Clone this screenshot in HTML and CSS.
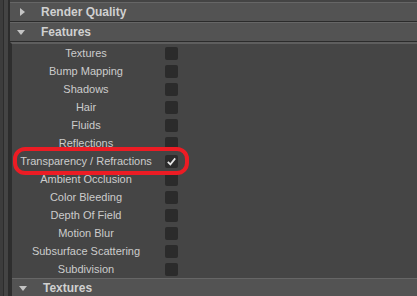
FILE: index.html
```html
<!DOCTYPE html>
<html lang="en">

<head>
    <meta charset="UTF-8">
    <title>Render Settings</title>
    <link rel="stylesheet" href="styles.css">
</head>

<body>
    <div class="page">
        <div class="gutter"></div>
        <div class="panel">
            <div class="header">
                <span class="tw"><span class="arrow-right"></span></span>Render Quality
            </div>
            <div class="header">
                <span class="tw"><span class="arrow-down"></span></span>Features
            </div>
            <div class="body">
                <div class="row"><span class="label">Textures</span><span class="check"></span></div>
                <div class="row"><span class="label">Bump Mapping</span><span class="check"></span></div>
                <div class="row"><span class="label">Shadows</span><span class="check"></span></div>
                <div class="row"><span class="label">Hair</span><span class="check"></span></div>
                <div class="row"><span class="label">Fluids</span><span class="check"></span></div>
                <div class="row"><span class="label">Reflections</span><span class="check"></span></div>
                <div class="row">
                    <span class="label">Transparency / Refractions</span>
                    <span class="check">
                        <svg width="13" height="13" viewBox="0 0 13 13">
                            <path d="M2.8 6.8 L5.4 9.4 L10.2 3.4" fill="none" stroke="#e6e6e6" stroke-width="1.7" />
                        </svg>
                    </span>
                </div>
                <div class="row"><span class="label">Ambient Occlusion</span><span class="check"></span></div>
                <div class="row"><span class="label">Color Bleeding</span><span class="check"></span></div>
                <div class="row"><span class="label">Depth Of Field</span><span class="check"></span></div>
                <div class="row"><span class="label">Motion Blur</span><span class="check"></span></div>
                <div class="row"><span class="label">Subsurface Scattering</span><span class="check"></span></div>
                <div class="row"><span class="label">Subdivision</span><span class="check"></span></div>
                <div class="highlight"></div>
                <div class="header">
                    <span class="tw"><span class="arrow-down"></span></span>Textures
                </div>
            </div>
        </div>
    </div>
</body>

</html>
```

FILE: styles.css
```css
body {
    margin: 0;
    background-color: #3c3c3c;
    font-family: "Liberation Sans", Arial, sans-serif;
    color: #cccccc;
    overflow: hidden;
}

.page {
    display: flex;
    height: 296px;
}

.gutter {
    width: 4px;
    margin-left: 3px;
    border-left: 1px solid #2c2c2c;
    border-right: 2px solid #2c2c2c;
    background-color: #444444;
}

.panel {
    flex: 1;
    padding-top: 2px;
    background-color: #444444;
}

.header {
    display: flex;
    align-items: center;
    height: 18px;
    border-top: 1px solid #666666;
    border-bottom: 1px solid #2b2b2b;
    background-color: #535353;
    font-size: 12px;
    font-weight: bold;
    color: #d0d0d0;
}

.tw {
    display: flex;
    align-items: center;
    width: 31px;
    padding-left: 7px;
    box-sizing: border-box;
}

.arrow-right {
    margin-left: 3px;
    border-left: 5px solid #c4c4c4;
    border-top: 4px solid transparent;
    border-bottom: 4px solid transparent;
}

.arrow-down {
    border-top: 5px solid #c4c4c4;
    border-left: 4.5px solid transparent;
    border-right: 4.5px solid transparent;
}

.body {
    position: relative;
    border-top: 2px solid #5e5e5e;
    border-left: 2px solid #2e2e2e;
    background-color: #454545;
}

.body .header {
    border-bottom: none;
}

.row {
    display: flex;
    align-items: center;
    height: 18px;
    font-size: 11px;
}

.label {
    width: 148px;
    text-align: center;
}

.check {
    width: 13px;
    height: 13px;
    margin-left: 5px;
    border-radius: 2px;
    background-color: #2b2b2b;
}

.check svg {
    display: block;
}

.highlight {
    position: absolute;
    left: 1px;
    top: 103px;
    width: 176px;
    height: 28px;
    box-sizing: border-box;
    border: 4px solid #ec1c24;
    border-radius: 12px;
}
```
